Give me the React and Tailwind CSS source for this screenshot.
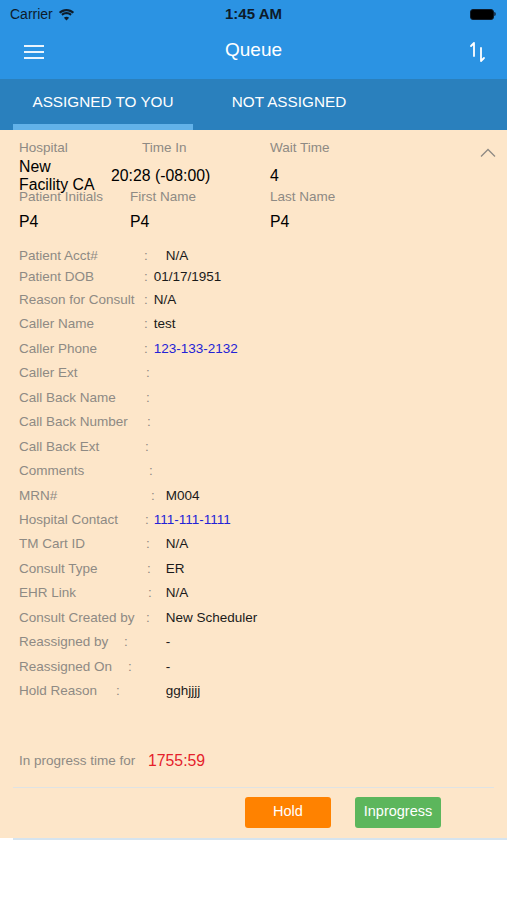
import React from 'react';

const rows = [
  { label: 'Patient Acct#', colon: 144, value: 'N/A', vx: 166, h: 'h-[21px]' },
  { label: 'Patient DOB', colon: 144, value: '01/17/1951', vx: 154, h: 'h-[22px]' },
  { label: 'Reason for Consult', colon: 144, value: 'N/A', vx: 154, h: 'h-[24px]' },
  { label: 'Caller Name', colon: 144, value: 'test', vx: 154 },
  { label: 'Caller Phone', colon: 144, value: '123-133-2132', vx: 154, link: true },
  { label: 'Caller Ext', colon: 146, value: '' },
  { label: 'Call Back Name', colon: 146, value: '' },
  { label: 'Call Back Number', colon: 147, value: '' },
  { label: 'Call Back Ext', colon: 145, value: '' },
  { label: 'Comments', colon: 149, value: '' },
  { label: 'MRN#', colon: 151, value: 'M004', vx: 166 },
  { label: 'Hospital Contact', colon: 145, value: '111-111-1111', vx: 154, link: true },
  { label: 'TM Cart ID', colon: 146, value: 'N/A', vx: 166 },
  { label: 'Consult Type', colon: 147, value: 'ER', vx: 166 },
  { label: 'EHR Link', colon: 148, value: 'N/A', vx: 166 },
  { label: 'Consult Created by', colon: 146, value: 'New Scheduler', vx: 166 },
  { label: 'Reassigned by', colon: 124, value: '-', vx: 166 },
  { label: 'Reassigned On', colon: 128, value: '-', vx: 166 },
  { label: 'Hold Reason', colon: 116, value: 'gghjjjj', vx: 166 },
];

const Row = ({ label, colon, value, vx, link, h }) => (
  <div className={`flex items-center ${h || 'h-[24.45px]'} text-[13.5px] leading-none`}>
    <span className="text-[#8e8a84] whitespace-nowrap" style={{ width: colon - 19 }}>
      {label}
    </span>
    <span className="text-[#8e8a84]">:</span>
    {value && (
      <span
        className={link ? 'text-[#2323d6]' : 'text-[#1a1a1a]'}
        style={{ marginLeft: vx - colon - 4 }}
      >
        {value}
      </span>
    )}
  </div>
);

export default function App() {
  return (
    <div className="w-[507px] h-[900px] bg-white overflow-hidden" style={{ fontFamily: '"Liberation Sans", Arial, sans-serif' }}>
      {/* status bar + nav */}
      <div className="bg-[#2b93e3]">
        <div className="h-[28px] flex items-center px-[10px] relative">
          <span className="text-[14px] text-[#0d1b2a]">Carrier</span>
          <svg width="17" height="13" viewBox="0 0 17 13" className="ml-[5px]">
            <path d="M8.5 3.2c2.4 0 4.5.9 6.1 2.4l1.5-1.6C14.1 2.1 11.4 1 8.5 1S2.9 2.1.9 4l1.5 1.6C4 4.1 6.1 3.2 8.5 3.2z" fill="#0d1b2a" />
            <path d="M8.5 6.3c1.5 0 2.8.5 3.8 1.4l1.5-1.6C12.4 4.9 10.5 4.1 8.5 4.1S4.6 4.9 3.2 6.1l1.5 1.6c1-.9 2.300-1.4 3.8-1.4z" fill="#0d1b2a" />
            <path d="M8.5 12.5l2.6-2.8c-.7-.6-1.6-1-2.6-1s-1.9.4-2.6 1z" fill="#0d1b2a" />
          </svg>
          <span className="absolute left-0 right-0 text-center text-[15px] font-bold text-[#0d1b2a]">1:45 AM</span>
          <div className="ml-auto flex items-center mr-[1px]">
            <div className="w-[24px] h-[11px] rounded-[3px] bg-black border border-[#0d1b2a]" />
            <div className="w-[2px] h-[4px] bg-[#1a3b5c] rounded-r-sm" />
          </div>
        </div>
        <div className="h-[51px] flex items-center justify-between px-[24px] pb-[3px] relative">
          <svg width="20" height="16" viewBox="0 0 20 16">
            <path d="M0 2h20M0 8h20M0 14h20" stroke="#eaf4fd" strokeWidth="2" />
          </svg>
          <span className="absolute left-0 right-0 text-center text-[19px] text-white pointer-events-none pb-[3px]">Queue</span>
          <svg width="20" height="22" viewBox="0 0 20 22" className="mr-[-5px]">
            <path d="M3 5l3-3v13" stroke="white" strokeWidth="1.8" fill="none" strokeLinecap="round" strokeLinejoin="round" />
            <path d="M13 7v13l3-3" stroke="white" strokeWidth="1.8" fill="none" strokeLinecap="round" strokeLinejoin="round" />
          </svg>
        </div>
      </div>

      {/* tabs */}
      <div className="bg-[#2a80bd] h-[51px] flex relative">
        <div className="w-[180px] ml-[13px] flex flex-col">
          <div className="flex-1 flex items-center justify-center text-[15.3px] font-medium text-white pt-[1px]">
            ASSIGNED TO YOU
          </div>
          <div className="h-[6px] bg-[#62b2e9]" />
        </div>
        <div className="w-[180px] flex items-center justify-center text-[15.3px] font-medium text-white pb-[5px] ml-[6px]">
          NOT ASSIGNED
        </div>
      </div>

      {/* content */}
      <div className="bg-[#fde6c9] h-[708px] flex flex-col relative">
        <div className="px-[19px] pt-[10px]">
          <div className="flex text-[13.5px] text-[#8e8a84] leading-none h-[15px] items-center">
            <span className="w-[123px]">Hospital</span>
            <span className="w-[128px]">Time In</span>
            <span>Wait Time</span>
          </div>
          <div className="flex items-center text-[15.8px] text-black leading-[18px] mt-[3px]">
            <span className="w-[92px]">New<br />Facility CA</span>
            <span className="w-[159px]">20:28 (-08:00)</span>
            <span>4</span>
          </div>
          <div className="flex text-[13.5px] text-[#8e8a84] leading-none h-[14px] items-center mt-[-4px]">
            <span className="w-[111px]">Patient Initials</span>
            <span className="w-[140px]">First Name</span>
            <span>Last Name</span>
          </div>
          <div className="flex text-[15.8px] text-black leading-none mt-[11px] h-[14px] items-center">
            <span className="w-[111px]">P4</span>
            <span className="w-[140px]">P4</span>
            <span>P4</span>
          </div>
          <svg width="16" height="10" viewBox="0 0 16 10" className="absolute right-[11px] top-[18px]">
            <path d="M1 8.5l7-7 7 7" stroke="#8e8a84" strokeWidth="1.3" fill="none" />
          </svg>

          <div className="mt-[16px] flex flex-col">
            {rows.map((r) => (
              <Row key={r.label} {...r} />
            ))}
          </div>

          <div className="flex items-center mt-[50px] leading-none">
            <span className="text-[13.5px] text-[#8e8a84] w-[129px]">In progress time for</span>
            <span className="text-[15.8px] text-[#e5212b]">1755:59</span>
          </div>
        </div>

        <div className="mx-[13px] mt-[18px] border-t border-[#dfe3e4]" />
        <div className="flex justify-start pl-[245px] gap-[24px] mt-[9px]">
          <button className="w-[86px] h-[31px] bg-[#ff8200] rounded-[3px] text-white text-[14.5px]">Hold</button>
          <button className="w-[86px] h-[31px] bg-[#5cb65c] rounded-[3px] text-white text-[14.5px]">Inprogress</button>
        </div>
      </div>
      <div className="ml-[13px] h-[2px] bg-[#d6e4ef]" />
    </div>
  );
}
